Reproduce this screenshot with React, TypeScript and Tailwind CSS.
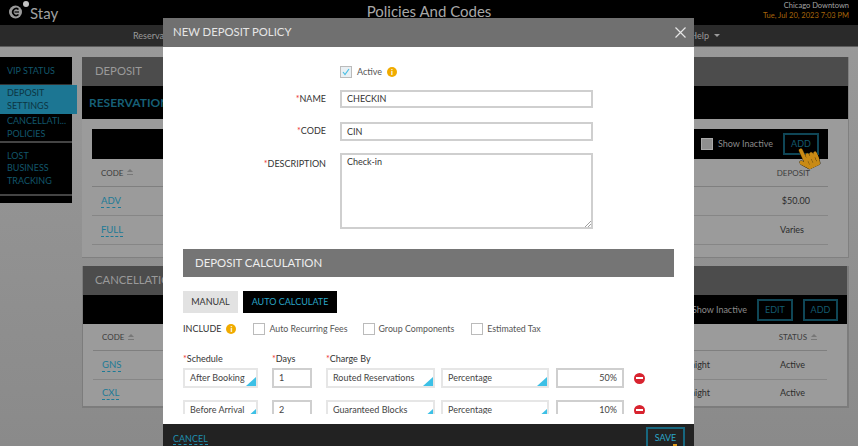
import React from "react";
import { FaHandPointer } from "react-icons/fa";

const Sort = () => (
  <svg width="6" height="7" viewBox="0 0 6 7" className="ml-[4px]" fill="#777"><path d="M3 0 L6 3 L0 3 Z" /><path d="M0 5 H6 V6 H0 Z" /></svg>
);

const Link = ({ children }: { children: React.ReactNode }) => (
  <span className="text-[#1d7a96] border-b border-dashed border-[#1d7a96] leading-[13px] inline-block">{children}</span>
);

const GhostBtn = ({ children, w }: { children: React.ReactNode; w: string }) => (
  <div className={`${w} h-[22px] border-2 border-[#0f4656] flex items-center justify-center text-[9px] text-[#135a6e]`}>{children}</div>
);

const Info = () => (
  <span className="w-[10px] h-[10px] rounded-full bg-[#f0ab00] text-white text-[8px] font-bold flex items-center justify-center leading-none">i</span>
);

const Sel = ({ w, children }: { w: string; children: React.ReactNode }) => (
  <div className={`${w} h-[20px] border-2 border-[#e6e6e6] relative flex items-center pl-[5px] text-[9px] text-[#444] overflow-hidden whitespace-nowrap`}>
    {children}
    <span className="absolute right-0 bottom-0 w-0 h-0 border-l-[10px] border-l-transparent border-b-[9px] border-b-[#3cc0e6]" />
  </div>
);

const Inp = ({ w, children, right }: { w: string; children: React.ReactNode; right?: boolean }) => (
  <div className={`${w} h-[20px] border-2 border-[#cfcfcf] flex items-center px-[5px] text-[9px] text-[#444] ${right ? "justify-end" : ""}`}>{children}</div>
);

const Minus = () => (
  <span className="w-[11px] h-[11px] rounded-full bg-[#d8232f] flex items-center justify-center">
    <span className="w-[7px] h-[2px] bg-white" />
  </span>
);

const Check = ({ label }: { label: string }) => (
  <div className="flex items-center gap-[4px]">
    <span className="w-[12px] h-[12px] border border-[#bbb] bg-white" />
    <span className="text-[8.8px] text-[#555]">{label}</span>
  </div>
);

const Row = ({ a, b, c, d, e }: { a: string; b: string; c: string; d: string; e: string }) => (
  <div className="flex items-center h-[20px] mb-[12px]">
    <Sel w="w-[75px]">{a}</Sel>
    <div className="ml-[14px]"><Inp w="w-[40px]">{b}</Inp></div>
    <div className="ml-[14px]"><Sel w="w-[109px]">{c}</Sel></div>
    <div className="ml-[6px]"><Sel w="w-[108px]">{d}</Sel></div>
    <div className="ml-[7px]"><Inp w="w-[68px]" right>{e}</Inp></div>
    <div className="ml-[10px]"><Minus /></div>
  </div>
);

const Req = () => <span className="text-[#e33]">*</span>;

export default function App() {
  return (
    <div className="relative w-[858px] h-[446px] overflow-hidden bg-gradient-to-b from-[#9a9a9a] to-[#8a8a8a] font-['Lato','Open_Sans',sans-serif]">
      {/* top bar */}
      <div className="h-[25px] bg-black flex items-start justify-between relative">
        <div className="flex items-start pl-[8px] pt-[1px]">
          <svg width="21" height="18" viewBox="0 0 21 18" fill="none">
            <circle cx="7.5" cy="11" r="6.5" fill="#9a9a9a" />
            <path d="M10.5 8.5 A3.4 3.4 0 1 0 10.5 13.5" stroke="#000" strokeWidth="1.6" />
            <path d="M6.5 11 H11" stroke="#000" strokeWidth="1.2" />
            <circle cx="18" cy="3" r="3" fill="#c4c4c4" />
          </svg>
          <span className="ml-[1px] mt-[3px] text-[15px] leading-[18px] text-[#a0a0a0]">Stay</span>
        </div>
        <div className="absolute left-0 right-0 top-0 text-center text-[15px] leading-[22px] text-[#a8a8a8]">Policies And Codes</div>
        <div className="text-right pr-[9px] pt-[1px] text-[7.5px] leading-[10px]">
          <div className="text-[#a5a5a5]">Chicago Downtown</div>
          <div className="text-[#a8650a]">Tue, Jul 20, 2023 7:03 PM</div>
        </div>
      </div>
      {/* nav */}
      <div className="h-[22px] bg-[#2a2a2a] border-b border-[#5c5c5c] flex items-center justify-between pl-[133px] pr-[138px] text-[9px] text-[#9a9a9a]">
        <span>Reserva</span>
        <span className="flex items-center gap-[5px]">Help<span className="w-0 h-0 border-l-[3px] border-r-[3px] border-t-[3px] border-l-transparent border-r-transparent border-t-[#9a9a9a]" /></span>
      </div>
      {/* page */}
      <div className="flex pt-[10px] items-start">
        <div className="w-[72px] shrink-0 bg-black text-[9px] text-[#12566b] relative">
          <div className="h-[28px] flex items-center pl-[7px] border-b border-[#333]">VIP STATUS</div>
          <div className="h-[29px] w-[77px] bg-[#1c7693] text-[#0c3542] flex flex-col justify-center pl-[7px] leading-[12.5px] relative z-10">
            <div>DEPOSIT</div><div>SETTINGS</div>
          </div>
          <div className="h-[29px] flex flex-col justify-center pl-[7px] border-b-2 border-[#444] leading-[12.5px]">
            <div>CANCELLATI...</div><div>POLICIES</div>
          </div>
          <div className="h-[53px] flex flex-col justify-center pl-[7px] border-b-2 border-[#444] leading-[12.5px]">
            <div>LOST</div><div>BUSINESS</div><div>TRACKING</div>
          </div>
          <div className="h-[7px]" />
        </div>
        <div className="ml-[10px] w-[767px]">
          <div className="h-[201px] bg-[#9b9b9b] border-r border-b border-[#808080]">
            <div className="h-[29px] bg-[#4c4c4c] flex items-center pl-[13px] text-[11.3px] text-[#9a9a9a]">DEPOSIT</div>
            <div className="h-[33px] bg-black flex items-center pl-[7px] text-[12px] font-bold text-[#165f76]">RESERVATION</div>
            <div className="px-[10px] pt-[10px] pr-[20px]">
              <div className="h-[30px] bg-black flex items-center justify-end pr-[9px]">
                <span className="w-[12px] h-[12px] bg-[#8f8f8f] border border-[#aaa]" />
                <span className="ml-[5px] mr-[10px] text-[9px] text-[#8a8a8a]">Show Inactive</span>
                <GhostBtn w="w-[36px]">ADD</GhostBtn>
              </div>
              <div className="h-[28px] flex items-center justify-between pl-[9px] text-[8px] text-[#3c3c3c] border-b border-[#7f7f7f]">
                <span className="flex items-center">CODE<Sort /></span>
                <span className="pr-[18px]">DEPOSIT</span>
              </div>
              <div className="h-[29px] flex items-center justify-between pl-[9px] text-[9px] text-[#2c2c2c] border-b border-[#868686]">
                <span className="text-[9.5px]"><Link>ADV</Link></span><span className="pr-[18px]">$50.00</span>
              </div>
              <div className="h-[29px] flex items-center justify-between pl-[9px] text-[9px] text-[#2c2c2c] border-b border-[#868686]">
                <span className="text-[9.5px]"><Link>FULL</Link></span><span className="pr-[24px]">Varies</span>
              </div>
            </div>
          </div>
          <div className="mt-[8px] bg-[#9b9b9b] border-r-2 border-b-2 border-l border-[#7c7c7c]">
            <div className="h-[29px] bg-[#4c4c4c] flex items-center pl-[12px] text-[11.3px] text-[#9a9a9a]">CANCELLATION</div>
            <div className="h-[29px] bg-black flex items-center justify-end pr-[9px] gap-[10px] text-[9px] text-[#8a8a8a]">
              <span>Show Inactive</span>
              <GhostBtn w="w-[36px]">EDIT</GhostBtn>
              <GhostBtn w="w-[35px]">ADD</GhostBtn>
            </div>
            <div className="px-[10px] pr-[20px]">
              <div className="h-[27px] flex items-center justify-between pl-[9px] text-[8px] text-[#3c3c3c] border-b border-[#7f7f7f]">
                <span className="flex items-center">CODE<Sort /></span>
                <span className="flex items-center pr-[10px]">STATUS<Sort /></span>
              </div>
              <div className="h-[29px] flex items-center justify-between pl-[9px] text-[9px] text-[#2c2c2c] border-b border-[#868686]">
                <span className="text-[9.5px]"><Link>GNS</Link></span>
                <span className="flex w-[137px] justify-between pr-[22px]"><span>night</span><span>Active</span></span>
              </div>
              <div className="h-[26px] flex items-center justify-between pl-[9px] text-[9px] text-[#2c2c2c]">
                <span className="text-[9.5px]"><Link>CXL</Link></span>
                <span className="flex w-[137px] justify-between pr-[22px]"><span>night</span><span>Active</span></span>
              </div>
            </div>
          </div>
        </div>
      </div>

      {/* cursor over the page */}
      <FaHandPointer className="absolute left-[798px] top-[146px] w-[20px] h-[23px] -rotate-[25deg] text-[#c98a14] stroke-[#3a2a05] [stroke-width:20px] [paint-order:stroke]" />

      {/* modal */}
      <div className="absolute left-[163px] top-[18px] w-[531px] h-[428px] bg-white flex flex-col">
        <div className="h-[29px] shrink-0 bg-[#707070] flex items-center justify-between pl-[10px] pr-[8px] text-[#e6e6e6]">
          <span className="text-[11.3px]">NEW DEPOSIT POLICY</span>
          <svg width="11" height="11" viewBox="0 0 11 11" className="stroke-[#e6e6e6]" fill="none" strokeWidth="1.2"><path d="M0.5 0.5 L10.5 10.5 M10.5 0.5 L0.5 10.5" /></svg>
        </div>
        <div className="flex-1 overflow-hidden px-[20px] mb-[10px]">
          <div className="h-[43px] pt-[18px] flex items-start">
            <div className="ml-[157px] flex items-center">
              <span className="w-[12px] h-[12px] border border-[#bbb] bg-[#e9f0f4] flex items-center justify-center">
                <svg width="8" height="8" viewBox="0 0 8 8" fill="none" stroke="#4bbfe4" strokeWidth="1.2"><path d="M1 4 L3 6.5 L7 1" /></svg>
              </span>
              <span className="ml-[5px] mr-[5px] text-[9px] text-[#555]">Active</span>
              <Info />
            </div>
          </div>
          <div className="grid grid-cols-[143px_253px] gap-x-[14px] text-[9px] text-[#333]">
            <div className="h-[18px] flex items-center justify-end"><span><Req />NAME</span></div>
            <div className="h-[18px] border-2 border-[#cfcfcf] flex items-center pl-[5px]">CHECKIN</div>
            <div className="h-[18px] mt-[14px] flex items-center justify-end"><span><Req />CODE</span></div>
            <div className="h-[19px] mt-[14px] border-2 border-[#cfcfcf] flex items-center pl-[5px]">CIN</div>
            <div className="mt-[16px] flex justify-end"><span className="leading-[14px]"><Req />DESCRIPTION</span></div>
            <div className="h-[76px] mt-[12px] border-2 border-[#cfcfcf] pl-[5px] relative">Check-in
              <svg width="7" height="7" viewBox="0 0 7 7" className="absolute right-0 bottom-0" stroke="#888" strokeWidth="0.8"><path d="M1 7 L7 1 M4 7 L7 4" /></svg>
            </div>
          </div>
          <div className="mt-[20px] h-[28px] bg-[#757575] flex items-center pl-[12px] text-[11.4px] text-[#eee]">DEPOSIT CALCULATION</div>
          <div className="mt-[14px] flex gap-[5px] text-[9px]">
            <div className="w-[55px] h-[22px] bg-[#e2e2e2] text-[#333] flex items-center justify-center">MANUAL</div>
            <div className="w-[94px] h-[22px] bg-black text-[#2aa5c8] flex items-center justify-center">AUTO CALCULATE</div>
          </div>
          <div className="mt-[9px] h-[14px] flex items-center">
            <span className="text-[9px] text-[#333]">INCLUDE</span>
            <span className="ml-[5px]"><Info /></span>
            <div className="ml-[17px]"><Check label="Auto Recurring Fees" /></div>
            <div className="ml-[15px]"><Check label="Group Components" /></div>
            <div className="ml-[17px]"><Check label="Estimated Tax" /></div>
          </div>
          <div className="mt-[17px] h-[12px] flex items-center text-[9px] text-[#333]">
            <span className="w-[89px]"><Req />Schedule</span>
            <span className="w-[54px]"><Req />Days</span>
            <span><Req />Charge By</span>
          </div>
          <div className="mt-[3px]">
            <Row a="After Booking" b="1" c="Routed Reservations" d="Percentage" e="50%" />
            <Row a="Before Arrival" b="2" c="Guaranteed Blocks" d="Percentage" e="10%" />
          </div>
        </div>
        <div className="h-[22px] shrink-0 bg-[#222] flex items-center justify-between pl-[10px] pr-[9px] relative overflow-hidden">
          <span className="text-[9px] text-[#1f8fb0] border-b border-dashed border-[#1f8fb0] leading-[11px] mt-[8px]">CANCEL</span>
          <div className="w-[39px] h-[22px] mt-[5px] border-2 border-[#17677f] text-[9px] text-[#2aa5c8] flex items-center justify-center">SAVE</div>
          <span className="absolute left-[510px] top-[20px] w-[4px] h-[3px] bg-[#e09a1a]" />
        </div>
      </div>
    </div>
  );
}
